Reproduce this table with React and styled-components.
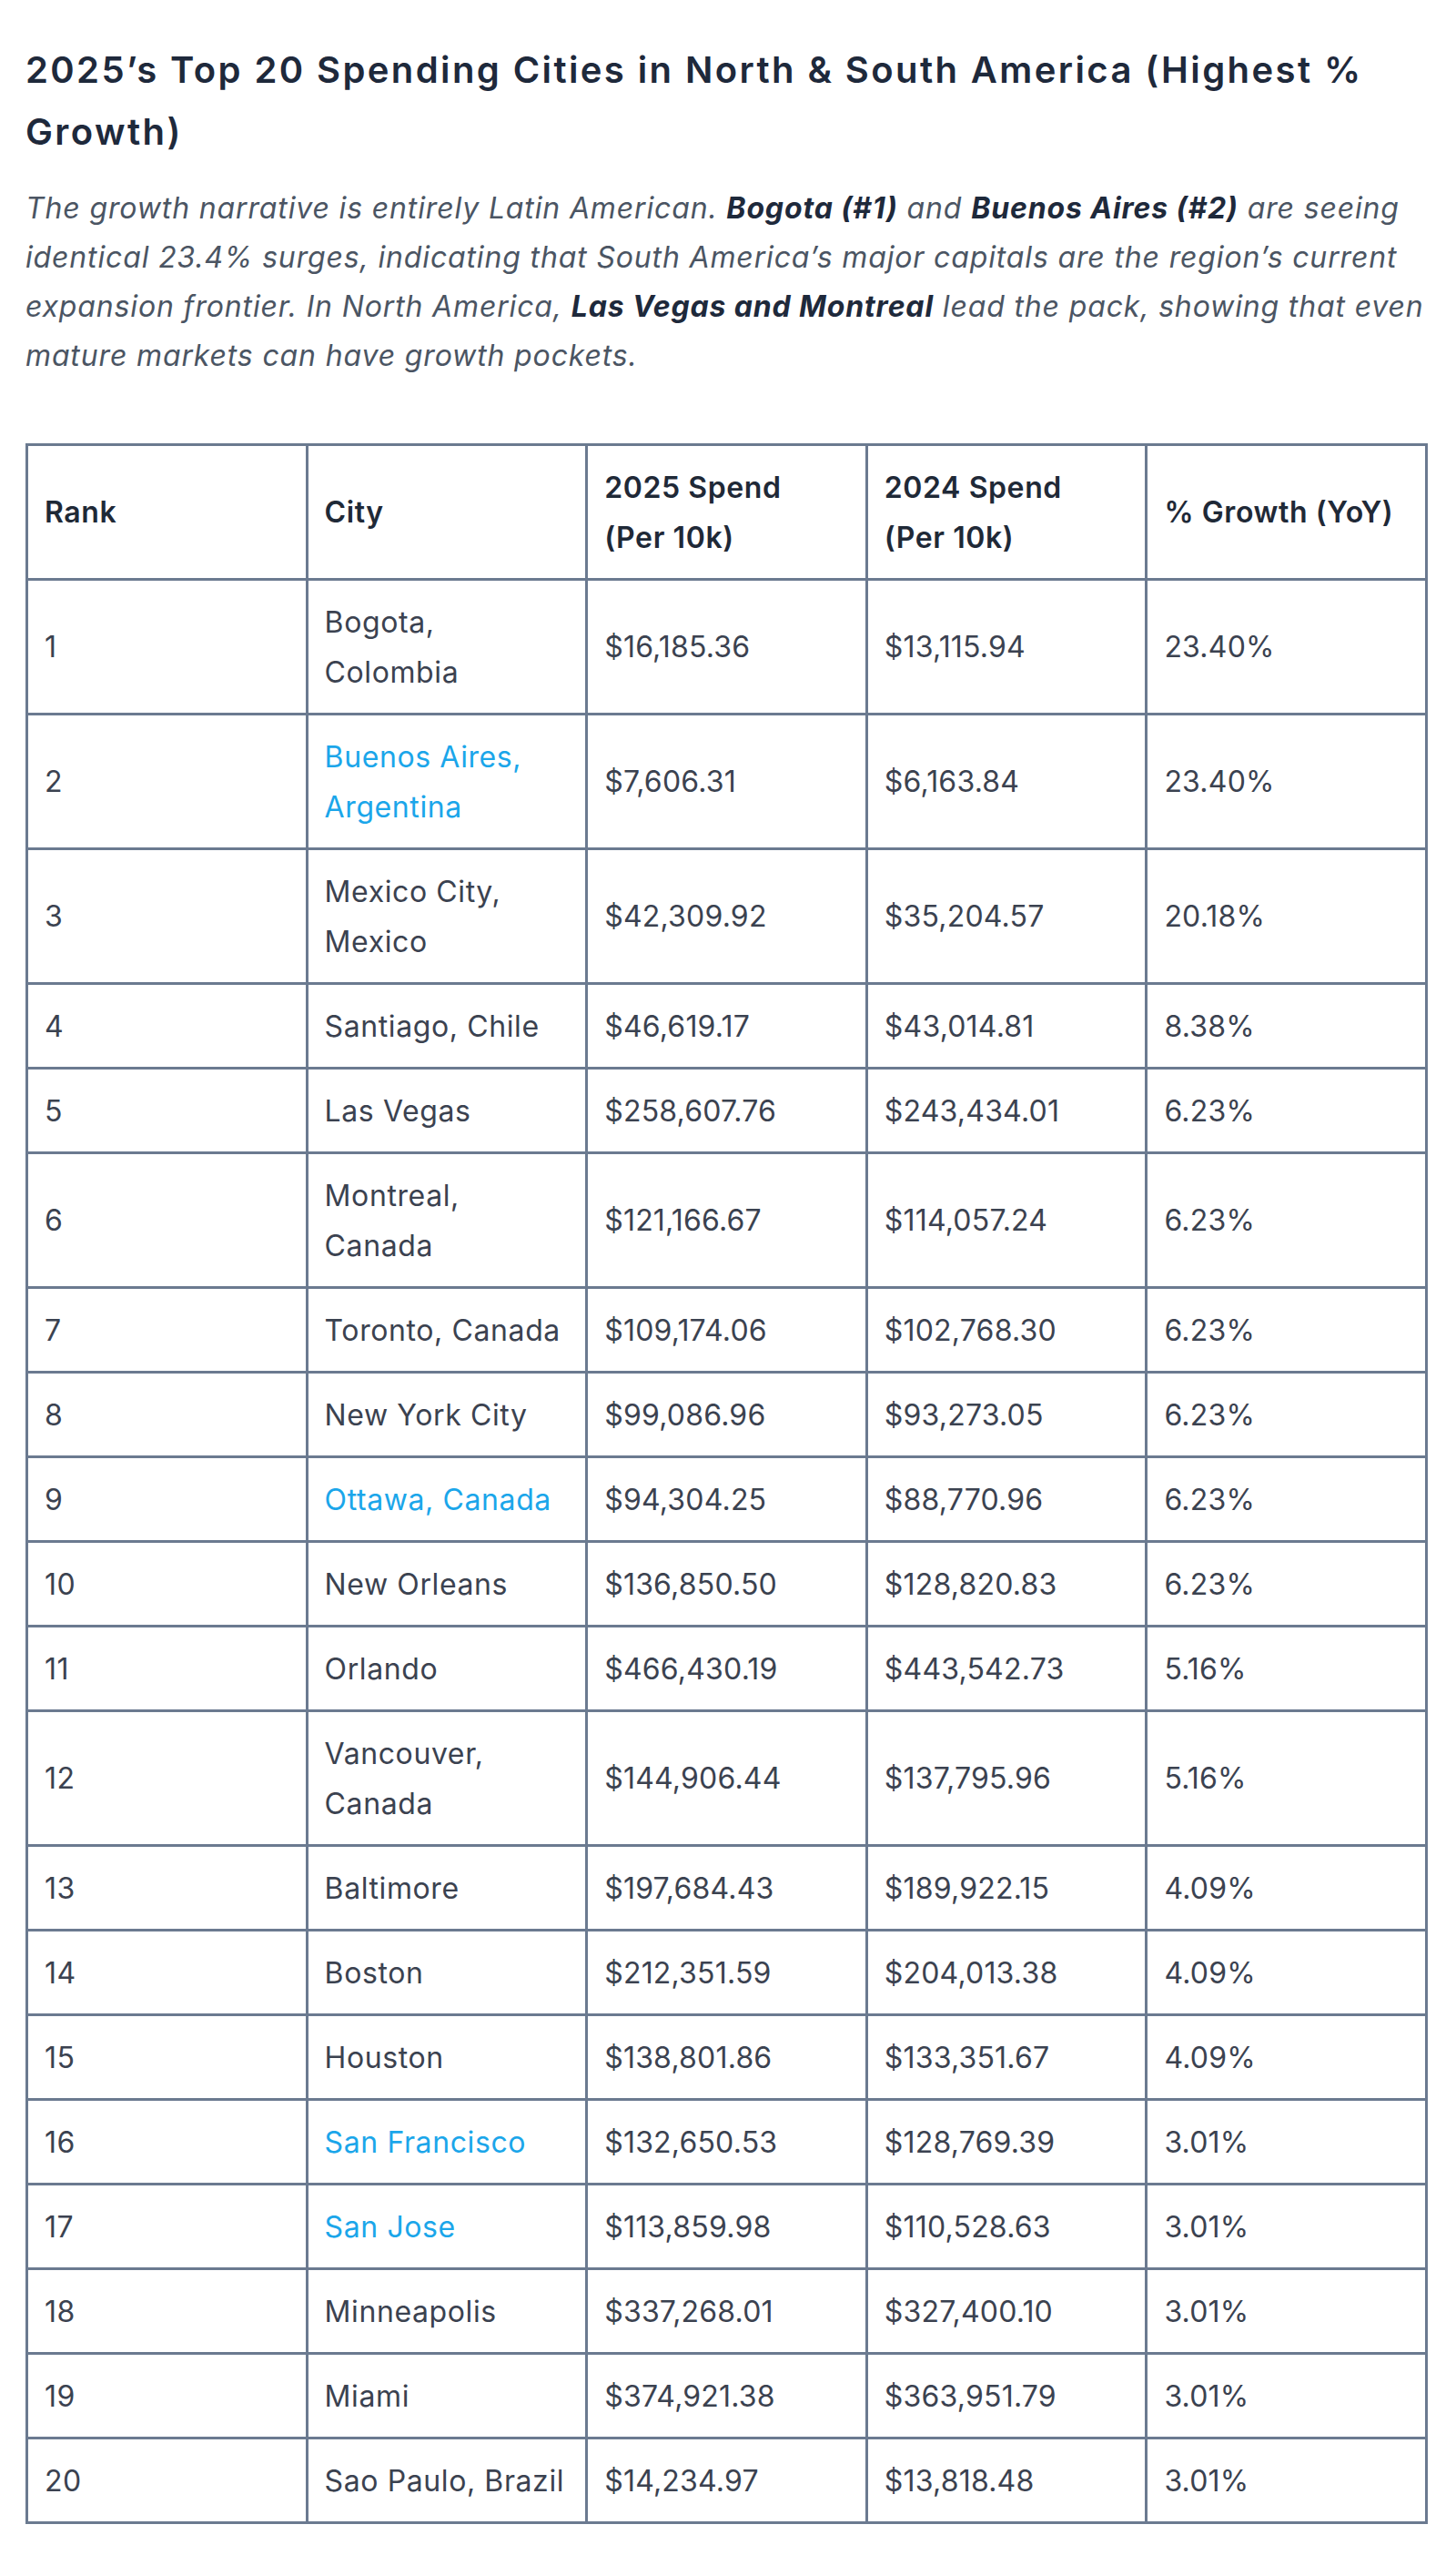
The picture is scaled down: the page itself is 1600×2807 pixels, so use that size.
import React from 'react';
import styled, { createGlobalStyle } from 'styled-components';

const GlobalStyle = createGlobalStyle`
	body {
		margin: 0;
		background: #ffffff;
		font-family: Inter, "Noto Sans", sans-serif;
	}
`;

const rows = [
	{ rank: 1, city: 'Bogota, Colombia', spend2025: '$16,185.36', spend2024: '$13,115.94', growth: '23.40%' },
	{ rank: 2, city: 'Buenos Aires, Argentina', link: true, spend2025: '$7,606.31', spend2024: '$6,163.84', growth: '23.40%' },
	{ rank: 3, city: 'Mexico City, Mexico', spend2025: '$42,309.92', spend2024: '$35,204.57', growth: '20.18%' },
	{ rank: 4, city: 'Santiago, Chile', spend2025: '$46,619.17', spend2024: '$43,014.81', growth: '8.38%' },
	{ rank: 5, city: 'Las Vegas', spend2025: '$258,607.76', spend2024: '$243,434.01', growth: '6.23%' },
	{ rank: 6, city: 'Montreal, Canada', spend2025: '$121,166.67', spend2024: '$114,057.24', growth: '6.23%' },
	{ rank: 7, city: 'Toronto, Canada', spend2025: '$109,174.06', spend2024: '$102,768.30', growth: '6.23%' },
	{ rank: 8, city: 'New York City', spend2025: '$99,086.96', spend2024: '$93,273.05', growth: '6.23%' },
	{ rank: 9, city: 'Ottawa, Canada', link: true, spend2025: '$94,304.25', spend2024: '$88,770.96', growth: '6.23%' },
	{ rank: 10, city: 'New Orleans', spend2025: '$136,850.50', spend2024: '$128,820.83', growth: '6.23%' },
	{ rank: 11, city: 'Orlando', spend2025: '$466,430.19', spend2024: '$443,542.73', growth: '5.16%' },
	{ rank: 12, city: 'Vancouver, Canada', spend2025: '$144,906.44', spend2024: '$137,795.96', growth: '5.16%' },
	{ rank: 13, city: 'Baltimore', spend2025: '$197,684.43', spend2024: '$189,922.15', growth: '4.09%' },
	{ rank: 14, city: 'Boston', spend2025: '$212,351.59', spend2024: '$204,013.38', growth: '4.09%' },
	{ rank: 15, city: 'Houston', spend2025: '$138,801.86', spend2024: '$133,351.67', growth: '4.09%' },
	{ rank: 16, city: 'San Francisco', link: true, spend2025: '$132,650.53', spend2024: '$128,769.39', growth: '3.01%' },
	{ rank: 17, city: 'San Jose', link: true, spend2025: '$113,859.98', spend2024: '$110,528.63', growth: '3.01%' },
	{ rank: 18, city: 'Minneapolis', spend2025: '$337,268.01', spend2024: '$327,400.10', growth: '3.01%' },
	{ rank: 19, city: 'Miami', spend2025: '$374,921.38', spend2024: '$363,951.79', growth: '3.01%' },
	{ rank: 20, city: 'Sao Paulo, Brazil', spend2025: '$14,234.97', spend2024: '$13,818.48', growth: '3.01%' }
];

const App = () => {
	return (
		<>
			<GlobalStyle />
			<Article>
				<Title>2025’s Top 20 Spending Cities in North &amp; South America (Highest % Growth)</Title>
				<Intro>
					The growth narrative is entirely Latin American. <Strong>Bogota (#1)</Strong> and{' '}
					<Strong>Buenos Aires (#2)</Strong> are seeing identical 23.4% surges, indicating that
					South America’s major capitals are the region’s current expansion frontier. In North
					America, <Strong>Las Vegas and Montreal</Strong> lead the pack, showing that even mature
					markets can have growth pockets.
				</Intro>

				<Table>
					<thead>
						<tr>
							<HeadCell>Rank</HeadCell>
							<HeadCell>City</HeadCell>
							<HeadCell>2025 Spend (Per 10k)</HeadCell>
							<HeadCell>2024 Spend (Per 10k)</HeadCell>
							<HeadCell>% Growth (YoY)</HeadCell>
						</tr>
					</thead>
					<tbody>
						{rows.map(row => (
							<tr key={row.rank}>
								<Cell>{row.rank}</Cell>
								<Cell>{row.link ? <CityLink href="#">{row.city}</CityLink> : row.city}</Cell>
								<Cell numeric>{row.spend2025}</Cell>
								<Cell numeric>{row.spend2024}</Cell>
								<Cell numeric>{row.growth}</Cell>
							</tr>
						))}
					</tbody>
				</Table>
			</Article>
		</>
	);
};

export default App;

// Styled-components
const Article = styled.div`
	padding: 43px 31px 40px 28px;
	color: #1e293b;
`;

const Title = styled.h2`
	margin: 0 0 23px 0;
	font-size: 40px;
	line-height: 68px;
	font-weight: 600;
	letter-spacing: 2.4px;
	color: #1e293b;
`;

const Intro = styled.p`
	margin: 0 0 69px 0;
	font-size: 32px;
	line-height: 54px;
	font-style: italic;
	letter-spacing: 0.85px;
	color: #4b5563;
`;

const Strong = styled.strong`
	font-weight: 700;
	color: #1e293b;
`;

const Table = styled.table`
	width: 100%;
	border-collapse: collapse;
	table-layout: fixed;
	border: 3px solid #6b7a90;
	font-size: 32px;
	line-height: 55px;
	letter-spacing: 0.6px;
`;

const HeadCell = styled.th`
	border: 3px solid #6b7a90;
	padding: 17.5px 18px;
	text-align: left;
	vertical-align: middle;
	font-weight: 600;
	color: #1f2937;
`;

const Cell = styled.td`
	border: 3px solid #6b7a90;
	padding: 17.5px 18px;
	vertical-align: middle;
	color: #3b4250;
	letter-spacing: ${props => (props.numeric ? '0.2px' : '0.6px')};
`;

const CityLink = styled.a`
	color: #1ba6ea;
	text-decoration: none;
`;
